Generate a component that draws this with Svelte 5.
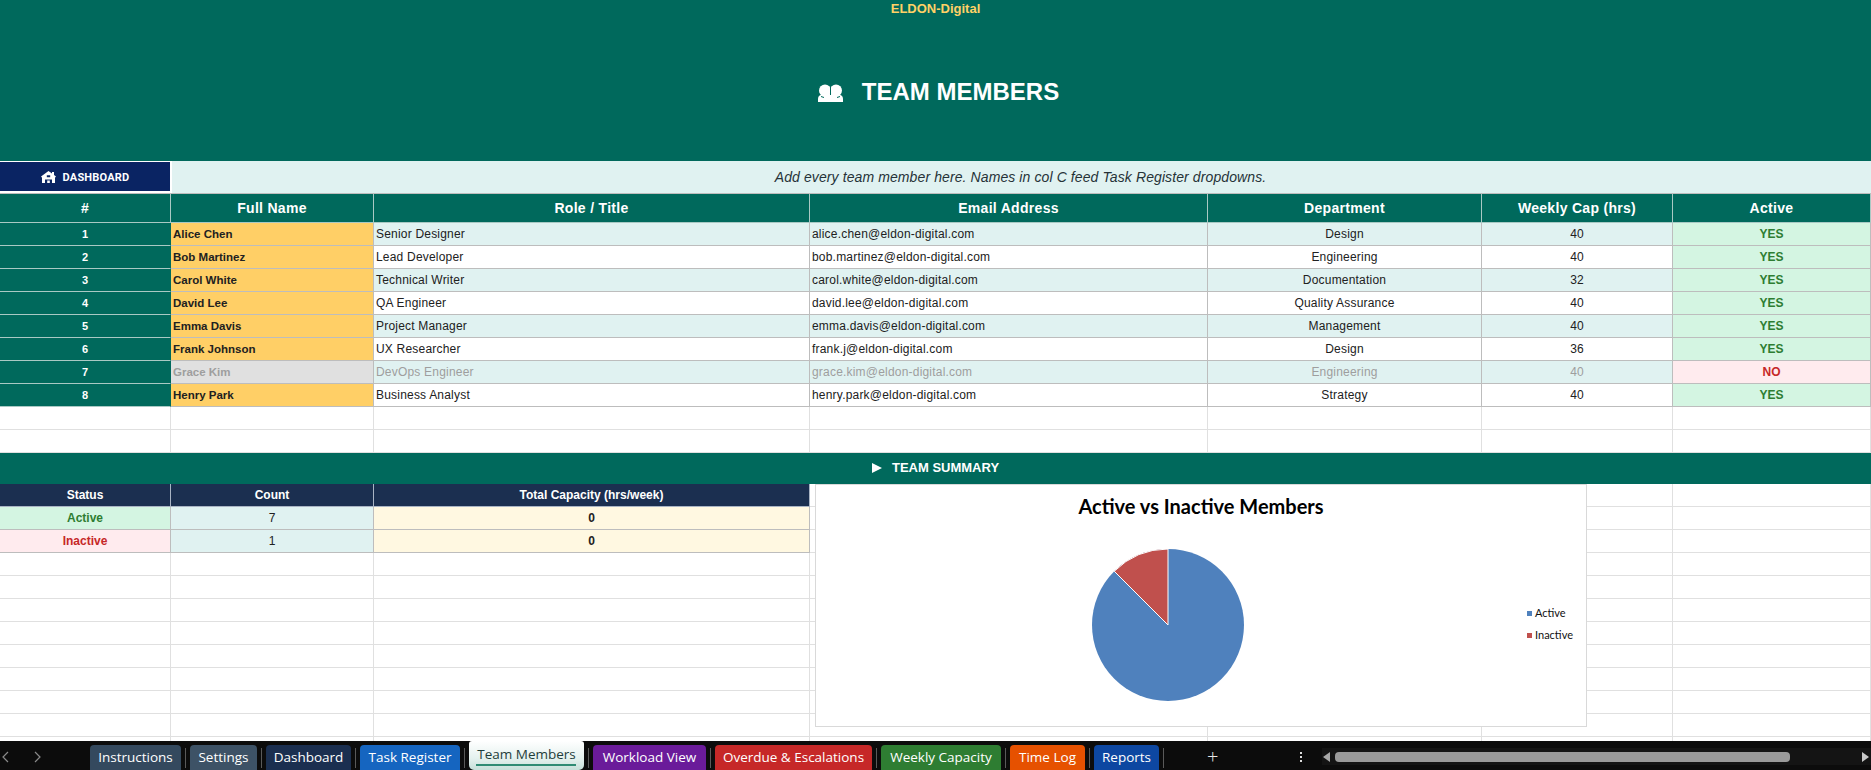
<script>
  const members = [
    { id: 1, name: 'Alice Chen', role: 'Senior Designer', email: 'alice.chen@eldon-digital.com', dept: 'Design', cap: 40, active: true },
    { id: 2, name: 'Bob Martinez', role: 'Lead Developer', email: 'bob.martinez@eldon-digital.com', dept: 'Engineering', cap: 40, active: true },
    { id: 3, name: 'Carol White', role: 'Technical Writer', email: 'carol.white@eldon-digital.com', dept: 'Documentation', cap: 32, active: true },
    { id: 4, name: 'David Lee', role: 'QA Engineer', email: 'david.lee@eldon-digital.com', dept: 'Quality Assurance', cap: 40, active: true },
    { id: 5, name: 'Emma Davis', role: 'Project Manager', email: 'emma.davis@eldon-digital.com', dept: 'Management', cap: 40, active: true },
    { id: 6, name: 'Frank Johnson', role: 'UX Researcher', email: 'frank.j@eldon-digital.com', dept: 'Design', cap: 36, active: true },
    { id: 7, name: 'Grace Kim', role: 'DevOps Engineer', email: 'grace.kim@eldon-digital.com', dept: 'Engineering', cap: 40, active: false },
    { id: 8, name: 'Henry Park', role: 'Business Analyst', email: 'henry.park@eldon-digital.com', dept: 'Strategy', cap: 40, active: true }
  ];

  const headers = ['#', 'Full Name', 'Role / Title', 'Email Address', 'Department', 'Weekly Cap (hrs)', 'Active'];

  const tabs = [
    { label: 'Instructions', color: '#34495e', width: 91 },
    { label: 'Settings', color: '#3d5266', width: 67 },
    { label: 'Dashboard', color: '#1b2f50', width: 85 },
    { label: 'Task Register', color: '#1565c0', width: 100 },
    { label: 'Team Members', active: true, width: 115 },
    { label: 'Workload View', color: '#6a1b9a', width: 113 },
    { label: 'Overdue & Escalations', color: '#c62828', width: 157 },
    { label: 'Weekly Capacity', color: '#2e7d32', width: 120 },
    { label: 'Time Log', color: '#e65100', width: 75 },
    { label: 'Reports', color: '#0d47a1', width: 65 }
  ];

  const blanks = (n) => Array.from({ length: n }, (_, i) => i);
</script>

<div class="page">
  <div class="sheet">
    <header class="banner">
      <div class="brand">ELDON-Digital</div>
      <h1>
        <svg class="people" viewBox="0 0 25 18" aria-hidden="true">
          <path d="M0 18v-3.500c0-2.500 2.500-3.800 5-4.500h15c2.500.7 5 2 5 4.500V18z" />
          <circle cx="7" cy="6.500" r="6" />
          <circle cx="18" cy="6.500" r="6" />
          <path class="gap" d="M12.500 0v11" />
          <path class="gap" d="M3 12.500l3 1M22 12.500l-3 1" />
        </svg>
        <span>TEAM MEMBERS</span>
      </h1>
    </header>

    <div class="toolbar">
      <button class="dash">
        <svg viewBox="0 0 15 12" aria-hidden="true">
          <path fill-rule="evenodd" d="M7.500 0L11 2.600V1h2v3.100l2 1.500-.8 1H14V12H1V6.600H.8l-.8-1zM5.800 4.200v2h3.400v-2zM4 8.500V12h2.200V9.500h2.600V12H11V8.500z" />
        </svg>
        DASHBOARD
      </button>
      <div class="note">Add every team member here. Names in col C feed Task Register dropdowns.</div>
    </div>

    <div class="row head">
      {#each headers as h}
        <div class="cell">{h}</div>
      {/each}
    </div>

    {#each members as m, i}
      <div class="row data" class:band={i % 2 === 0} class:off={!m.active}>
        <div class="cell num">{m.id}</div>
        <div class="cell name">{m.name}</div>
        <div class="cell">{m.role}</div>
        <div class="cell">{m.email}</div>
        <div class="cell mid">{m.dept}</div>
        <div class="cell mid">{m.cap}</div>
        <div class="cell state" class:no={!m.active}>{m.active ? 'YES' : 'NO'}</div>
      </div>
    {/each}

    {#each blanks(2) as _}
      <div class="row blank">
        {#each blanks(7) as __}<div class="cell"></div>{/each}
      </div>
    {/each}

    <div class="section"><span class="tri"></span>TEAM SUMMARY</div>

    <div class="row blank sum-head">
      <div class="cell">Status</div>
      <div class="cell">Count</div>
      <div class="cell">Total Capacity (hrs/week)</div>
      {#each blanks(4) as _}<div class="cell plain"></div>{/each}
    </div>
    <div class="row blank sum">
      <div class="cell status yes">Active</div>
      <div class="cell count">7</div>
      <div class="cell total">0</div>
      {#each blanks(4) as _}<div class="cell plain"></div>{/each}
    </div>
    <div class="row blank sum">
      <div class="cell status nope">Inactive</div>
      <div class="cell count">1</div>
      <div class="cell total">0</div>
      {#each blanks(4) as _}<div class="cell plain"></div>{/each}
    </div>

    {#each blanks(9) as _}
      <div class="row blank">
        {#each blanks(7) as __}<div class="cell"></div>{/each}
      </div>
    {/each}

    <div class="chart">
      <div class="chart-title">Active vs Inactive Members</div>
      <svg class="pie" viewBox="0 0 154 154" aria-hidden="true">
        <circle cx="77" cy="77" r="76" fill="#4f81bd" />
        <path d="M77 77V1A76 76 0 0 0 23.260 23.260Z" fill="#c0504d" stroke="#fff" stroke-width="1" stroke-linejoin="round" />
      </svg>
      <div class="legend">
        <div><i style="background:#4f81bd"></i>Active</div>
        <div><i style="background:#c0504d"></i>Inactive</div>
      </div>
    </div>
  </div>

  <footer class="tabbar">
    <div class="nav">
      <svg viewBox="0 0 44 12" aria-hidden="true"><path d="M8 1L3 6l5 5M35 1l5 5-5 5" /></svg>
    </div>
    <div class="tabs">
      {#each tabs as t}
        <div class="tab" class:active={t.active} style="width:{t.width}px;background:{t.color ?? ''}">{t.label}</div>
        <span class="sep"></span>
      {/each}
    </div>
    <div class="plus">+</div>
    <div class="kebab"><b></b><b></b><b></b></div>
    <div class="scroll">
      <span class="arrow left"></span>
      <div class="track"><div class="thumb"></div></div>
      <span class="arrow right"></span>
    </div>
  </footer>
</div>

<style>
  :global(body) {
    margin: 0;
    background: #fff;
  }

  .page {
    width: 1871px;
    height: 770px;
    display: flex;
    flex-direction: column;
    overflow: hidden;
    font-family: "Liberation Sans", Arial, sans-serif;
    font-size: 12px;
    color: #212121;
  }

  .sheet {
    position: relative;
    height: 741px;
    overflow: hidden;
    flex: none;
  }

  .banner {
    height: 161px;
    background: #00695c;
    display: flex;
    flex-direction: column;
    align-items: center;
  }

  .brand {
    color: #ffd166;
    font-weight: 700;
    font-size: 13px;
    line-height: 18px;
  }

  h1 {
    margin: 59px 0 0 6px;
    display: flex;
    align-items: center;
    gap: 19px;
    color: #fff;
    font-size: 24px;
    line-height: 30px;
    font-weight: 700;
  }

  .people {
    width: 25px;
    height: 18px;
    fill: #fff;
    margin-top: 2px;
  }

  .people .gap {
    fill: none;
    stroke: #00695c;
    stroke-width: 1;
  }

  .toolbar {
    height: 32px;
    display: flex;
    background: #e0f2f1;
    border-bottom: 1px solid #bdbdbd;
    box-sizing: content-box;
  }

  .dash {
    width: 172px;
    height: 32px;
    flex: none;
    box-sizing: border-box;
    border: 0;
    border-right: 2px solid #fff;
    border-bottom: 2px solid #fff;
    border-top: 1px solid #fff;
    background: #0a2463;
    color: #fff;
    font-family: Roboto, sans-serif;
    font-size: 11px;
    font-weight: 700;
    letter-spacing: 0.2px;
    display: flex;
    align-items: center;
    justify-content: center;
    gap: 7px;
    padding: 1px 0 0;
  }

  .dash svg {
    width: 15px;
    height: 12px;
    fill: #fff;
  }

  .note {
    flex: 1;
    margin-left: -2px;
    text-align: center;
    font-style: italic;
    font-size: 14px;
    letter-spacing: 0.1px;
    line-height: 32px;
    color: #263238;
  }

  .row {
    display: grid;
    grid-template-columns: 171px 203px 436px 398px 274px 191px 198px;
    height: 23px;
    box-sizing: border-box;
  }

  .cell {
    box-sizing: border-box;
    border-right: 1px solid #bdbdbd;
    border-bottom: 1px solid #bdbdbd;
    padding: 0 2px;
    line-height: 22px;
    white-space: nowrap;
    overflow: hidden;
  }

  .data .cell {
    letter-spacing: 0.2px;
  }

  .head {
    height: 29px;
    background: #00695c;
    color: #fff;
    font-weight: 700;
    font-size: 14px;
    letter-spacing: 0.3px;
    text-align: center;
  }

  .head .cell {
    line-height: 28px;
    border-color: #a9c9c4;
  }

  .data {
    background: #fff;
  }

  .data.band {
    background: #e0f2f1;
  }

  .data .num {
    background: #00695c;
    color: #fff;
    font-weight: 700;
    font-size: 11px;
    letter-spacing: 0;
    text-align: center;
    border-bottom-color: #a9c9c4;
    border-right-color: #00695c;
  }

  .data .name {
    background: #ffcf66;
    font-weight: 700;
    font-size: 11.500px;
    letter-spacing: 0;
  }

  .mid {
    text-align: center;
  }

  .data .state {
    background: #d4f5e2;
    color: #2e7d32;
    font-weight: 700;
    letter-spacing: 0;
    text-align: center;
  }

  .data .state.no {
    background: #ffebee;
    color: #c62828;
  }

  .off .cell:not(.num):not(.state) {
    color: #9e9e9e;
  }

  .data.off .name {
    background: #e0e0e0;
  }

  .blank .cell {
    border-color: #e0e0e0;
  }

  .section {
    height: 31px;
    box-sizing: border-box;
    padding-bottom: 2px;
    background: #00695c;
    color: #fff;
    font-weight: 700;
    font-size: 13px;
    display: flex;
    align-items: center;
    justify-content: center;
    gap: 10px;
  }

  .tri {
    width: 0;
    height: 0;
    border-left: 10px solid #fff;
    border-top: 5px solid transparent;
    border-bottom: 5px solid transparent;
  }

  .sum-head .cell:not(.plain) {
    background: #1b2f50;
    color: #fff;
    font-weight: 700;
    text-align: center;
    border-color: #a9b4c4;
  }

  .sum .cell:not(.plain) {
    border-color: #bdbdbd;
    text-align: center;
  }

  .status {
    font-weight: 700;
  }

  .status.yes {
    background: #d4f5e2;
    color: #2e7d32;
  }

  .status.nope {
    background: #ffebee;
    color: #c62828;
  }

  .count {
    background: #e0f2f1;
  }

  .total {
    background: #fff8e1;
    font-weight: 700;
  }

  .chart {
    position: absolute;
    left: 815px;
    top: 484px;
    width: 772px;
    height: 243px;
    box-sizing: border-box;
    background: #fff;
    border: 1px solid #d9d9d9;
  }

  .chart-title {
    text-align: center;
    font-family: Lato, sans-serif;
    font-weight: 700;
    font-size: 20px;
    line-height: 26px;
    margin-top: 8px;
    color: #000;
  }

  .pie {
    position: absolute;
    left: 275px;
    top: 63px;
    width: 154px;
    height: 154px;
  }

  .legend {
    position: absolute;
    left: 711px;
    top: 121px;
    font-family: Lato, sans-serif;
    font-size: 11px;
    color: #111;
    display: flex;
    flex-direction: column;
    gap: 8px;
  }

  .legend div {
    display: flex;
    align-items: center;
    gap: 3px;
    line-height: 14px;
  }

  .legend i {
    width: 5px;
    height: 5px;
    display: block;
  }

  .tabbar {
    position: relative;
    height: 29px;
    flex: none;
    background: #0c0c0c;
    color: #fff;
    display: flex;
  }

  .nav {
    width: 90px;
    flex: none;
    padding-top: 10px;
    box-sizing: border-box;
  }

  .nav svg {
    width: 44px;
    height: 12px;
    display: block;
    fill: none;
    stroke: #8a8a8a;
    stroke-width: 1.2;
  }

  .tabs {
    display: flex;
    align-items: flex-end;
    height: 100%;
  }

  .tab {
    height: 25px;
    flex: none;
    box-sizing: border-box;
    border-radius: 4px 4px 0 0;
    text-align: center;
    font-family: "Open Sans", sans-serif;
    font-size: 13.500px;
    line-height: 25px;
    white-space: nowrap;
    color: #fff;
  }

  .tab.active {
    position: relative;
    height: 29px;
    background: linear-gradient(#fff, #e4f1ee 60%, #c5dfd9);
    color: #1f3d3a;
    line-height: 26px;
    border-radius: 3px 3px 5px 5px;
  }

  .tab.active::after {
    content: '';
    position: absolute;
    left: 7px;
    right: 8px;
    bottom: 4px;
    height: 2px;
    background: #2e8b74;
  }

  .sep {
    width: 1px;
    height: 20px;
    margin: 0 4px 2px;
    flex: none;
    background: #5a5a5a;
  }

  .plus {
    position: absolute;
    left: 1207px;
    top: 3px;
    font-family: "Open Sans", sans-serif;
    font-size: 20px;
    font-weight: 300;
    line-height: 26px;
    color: #e8e8e8;
  }

  .kebab {
    position: absolute;
    left: 1300px;
    top: 11px;
    display: flex;
    flex-direction: column;
    gap: 2px;
  }

  .kebab b {
    width: 2px;
    height: 2px;
    background: #ddd;
  }

  .scroll {
    position: absolute;
    left: 1322px;
    right: 0;
    top: 7px;
    height: 17px;
    display: flex;
    align-items: center;
    background: #141414;
  }

  .track {
    flex: 1;
    margin: 0 8px 0 5px;
  }

  .thumb {
    width: 455px;
    height: 10px;
    border-radius: 4px;
    background: #9a9a9a;
  }

  .arrow {
    width: 0;
    height: 0;
    border-top: 5px solid transparent;
    border-bottom: 5px solid transparent;
  }

  .arrow.left {
    margin-left: 1px;
    border-right: 7px solid #a8a8a8;
  }

  .arrow.right {
    margin-right: 2px;
    border-left: 7px solid #c8c8c8;
  }
</style>
